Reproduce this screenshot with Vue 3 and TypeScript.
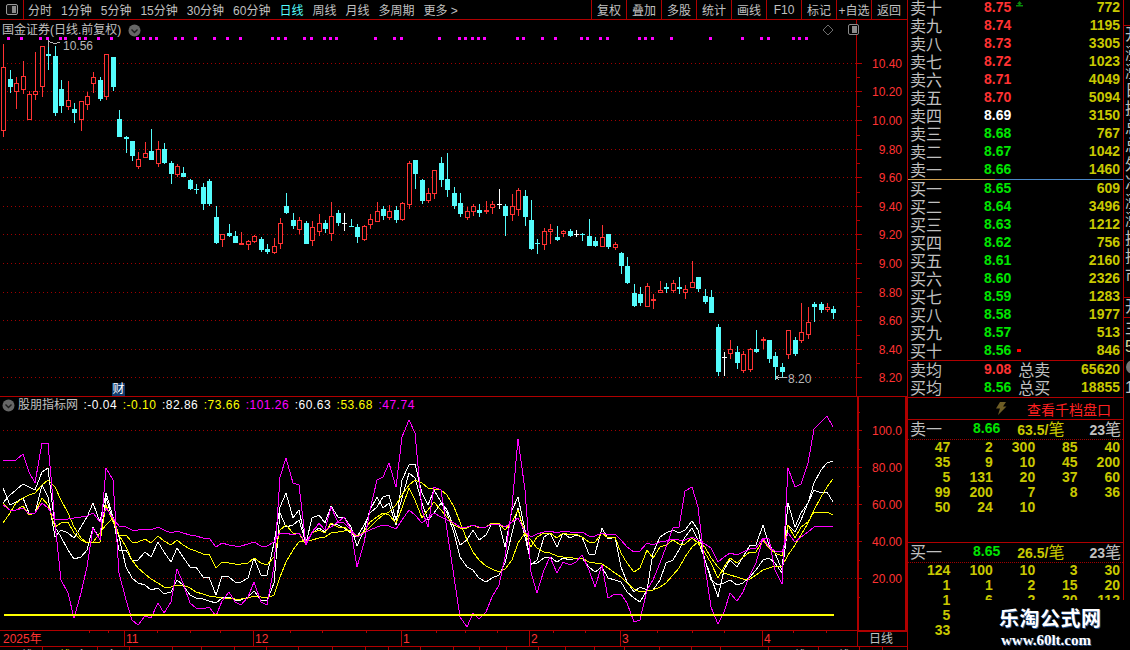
<script setup lang="ts">
type CandleRow = [number, number, number, number, string]

// 日K数据：hi, lo, top, bottom, 类型（r 阳 c 阴 w 十字），读图时按分段记录
const partA: CandleRow[] = [
  [12,290,82,272,'r'],[90,158,117,141,'c'],[112,207,130,155,'r'],[64,162,109,149,'r'],[154,240,163,239,'r'],
  [37,180,154,164,'r'],[18,170,19,140,'r'],[0,90,42,48,'c'],[18,228,48,219,'c'],[120,219,147,198,'c'],
  [123,210,181,200,'r'],[190,249,207,219,'c'],[183,272,184,239,'r'],[156,210,169,194,'r'],[96,159,112,131,'r'],
  [111,183,120,177,'c'],[42,180,43,170,'r'],[51,153,51,141,'c'],[210,291,237,291,'c'],[288,339,291,297,'c'],
  [303,362,303,348,'c'],[336,387,358,380,'r'],[306,354,340,353,'r'],[267,360,333,360,'c'],[303,381,327,372,'r'],
  [309,372,327,370,'c'],[363,432,369,402,'c'],[372,411,378,405,'r'],[381,411,399,411,'c'],[417,450,420,447,'c'],
  [432,462,447,450,'c'],[429,510,441,492,'c'],[417,498,423,492,'c'],[498,612,531,609,'c'],[582,621,582,600,'r'],
  [552,590,579,588,'c'],[573,609,588,609,'c'],[576,615,609,615,'r'],[600,630,603,615,'r'],[585,609,588,606,'r'],
  [591,636,597,630,'c'],[612,642,627,636,'c'],[594,642,618,639,'r'],[534,627,549,612,'r'],[459,522,498,519,'c'],
  [519,567,540,558,'c'],[531,582,540,570,'r'],
]
const partB: CandleRow[] = [
  [273,342,279,342,'c'],[273,348,291,333,'r'],[252,318,279,306,'r'],[270,309,279,297,'c'],[216,333,258,312,'r'],
  [240,288,249,279,'c'],[249,303,279,282,'w'],[267,291,288,291,'c'],[282,339,291,321,'c'],[285,333,288,330,'r'],
  [252,297,267,285,'r'],[216,276,243,276,'r'],[228,270,237,258,'c'],[225,270,243,264,'r'],[228,279,240,270,'c'],
  [216,273,219,270,'r'],[93,237,99,225,'r'],[90,177,90,132,'c'],[147,222,150,213,'c'],[174,219,189,213,'r'],
  [120,207,120,192,'r'],[81,171,99,150,'c'],[69,201,147,180,'c'],[171,237,189,228,'c'],[189,261,219,252,'c'],
  [231,270,243,264,'r'],[222,258,228,246,'r'],[222,261,240,249,'c'],[213,252,240,246,'r'],[213,252,222,234,'r'],
  [177,237,222,225,'w'],[222,318,228,258,'c'],[192,273,228,255,'r'],[174,258,180,240,'r'],[180,288,198,261,'c'],
  [210,360,270,357,'c'],[327,372,339,342,'c'],[294,360,303,345,'r'],[282,342,297,306,'r'],[288,333,321,330,'c'],
  [300,321,303,312,'r'],[297,321,303,318,'c'],[300,321,312,315,'w'],
]
const partC: CandleRow[] = [
  [129,153,132,136,'c'],[87,168,138,168,'c'],[141,171,153,168,'c'],[105,171,141,171,'r'],[132,177,132,171,'c'],
  [156,180,162,174,'r'],[186,252,189,228,'c'],[201,282,228,279,'c'],[282,351,309,348,'c'],[291,348,312,339,'c'],
  [279,351,288,351,'r'],[312,357,327,330,'r'],[273,309,300,309,'r'],[279,309,291,297,'c'],[270,309,279,303,'r'],
  [261,312,291,297,'c'],[285,327,297,309,'r'],[213,294,276,294,'r'],[261,306,261,297,'c'],[297,342,318,336,'c'],
  [300,369,321,369,'c'],[402,558,411,546,'c'],[486,558,501,504,'w'],[450,507,477,492,'r'],[468,537,486,519,'c'],
  [483,549,492,543,'r'],[474,546,477,540,'r'],[420,489,477,486,'c'],[441,477,447,453,'r'],[450,519,450,507,'c'],
  [486,570,498,531,'c'],[519,561,531,546,'c'],[420,507,420,495,'r'],[441,498,450,492,'c'],[339,459,426,453,'r'],
  [351,447,396,435,'r'],[336,396,342,351,'c'],[336,369,342,360,'c'],[339,366,351,360,'r'],[348,387,357,369,'c'],
]

const barX = (i: number) => Math.round(3.3 + 6.435 * i)
const toAbs = (rows: CandleRow[], offset: number) =>
  rows.map((r) => ({
    hi: Math.round(offset + r[0] / 3),
    lo: Math.round(offset + r[1] / 3),
    top: Math.round(offset + r[2] / 3),
    bot: Math.round(offset + r[3] / 3),
    kind: r[4],
  }))
const candles = [...toAbs(partA, 40), ...toAbs(partB, 130), ...toAbs(partC, 190)].map((c, i) => ({
  ...c,
  x: barX(i),
  id: i,
}))
const candleColor: Record<string, string> = { r: '#ff3232', c: '#54fcfc', w: '#ffffff' }

// 顶部信号点
const signalDots = [
  ...[25,65,121,142,182,197,238,256,295,334,412,430,451,469,526,547,586,643,682,721,817,835,856,913,934,973,991,1009,1126,1183,1204,1318].map((z) => z / 3),
  ...[28,46,67,85,103,202,220,277,316,394,412,451,472,568,586,607,664,781,877,934,955,1030,1048,1069].map((z) => 450 + z / 3),
].map((x) => Math.round(x - 1.5))

const mainGrid = [63, 91, 120, 149, 177, 206, 234, 263, 292, 320, 349, 377]
const mainLabels = ['10.40','10.20','10.00','9.80','9.60','9.40','9.20','9.00','8.80','8.60','8.40','8.20']
const mainMinor = mainGrid.slice(0, -1).map((y, i) => Math.round((y + mainGrid[i + 1]) / 2))
const subGrid = [430, 467, 504, 541, 578]
const subLabels = ['100.0', '80.00', '60.00', '40.00', '20.00']
const subMinor = [412, 449, 486, 523, 560, 597]

// 指标线：前 70 点 + 后 60 点，分两段读取
const makeLine = (head: number[], tail: number[]) =>
  [
    ...head.map((z, i) => `${barX(i)},${Math.round(370 + z / 3)}`),
    ...tail.map((z, i) => `${barX(i + 70)},${Math.round(390 + z / 3)}`),
  ].join(' ')

const subLines = [
  {
    color: '#ffffff',
    points: makeLine(
      [355,405,395,385,430,430,345,380,500,480,490,505,470,440,400,455,370,440,540,540,570,570,545,560,515,545,575,533,560,590,592,620,620,675,618,620,635,635,625,565,615,615,520,410,370,445,420,520,445,435,460,408,440,442,470,527,480,420,380,415,400,465,330,285,282,370,405,360,395,420],
      [410,465,450,420,450,435,400,400,470,360,320,420,525,510,440,430,470,428,445,435,440,492,492,415,447,440,530,575,605,590,600,490,440,430,420,430,420,392,420,510,560,620,540,510,530,500,465,465,405,465,490,540,340,410,370,340,300,310,305,337],
    ),
  },
  {
    color: '#ffffff',
    points: makeLine(
      [400,375,360,343,352,360,305,295,470,500,540,568,562,540,470,510,385,450,500,590,625,640,645,660,655,672,665,630,645,675,683,688,692,700,685,682,690,690,680,662,690,692,640,430,470,465,450,520,490,475,485,462,465,475,490,500,465,430,410,380,375,450,385,310,325,400,450,430,400,430],
      [430,500,530,540,565,575,565,555,520,430,355,440,520,520,505,500,515,505,510,505,505,530,545,530,565,570,575,605,625,635,600,600,570,520,510,480,440,415,450,510,570,585,580,570,585,580,560,540,510,505,520,550,405,425,390,340,280,240,218,213],
    ),
  },
  {
    color: '#ffff00',
    points: makeLine(
      [400,420,420,407,435,430,385,405,470,460,455,490,510,520,515,515,405,455,495,495,515,515,508,518,498,512,525,510,525,538,542,552,552,595,575,580,583,583,578,563,578,584,560,480,465,490,490,525,490,480,490,460,470,470,485,500,485,455,440,430,435,460,415,355,390,445,420,395,420,440],
      [405,415,415,405,415,410,400,400,420,395,360,430,470,440,430,428,445,428,435,433,440,457,457,428,445,442,490,520,545,533,480,505,470,465,450,462,462,445,460,490,520,565,530,505,520,500,487,485,450,475,490,498,405,445,410,395,365,370,365,375],
    ),
  },
  {
    color: '#ffff00',
    points: makeLine(
      [460,430,400,385,375,368,345,330,350,390,430,470,505,520,515,490,465,445,495,530,570,595,612,628,640,650,652,645,645,655,665,672,678,682,683,685,687,687,683,678,682,685,675,620,575,540,515,510,510,505,500,490,487,483,480,497,490,470,450,435,425,405,375,345,330,340,355,358,360,375],
      [350,395,450,485,510,527,537,545,538,510,460,430,450,475,485,490,497,500,502,507,505,515,520,522,535,550,560,578,598,605,602,600,590,580,555,535,500,470,455,470,505,530,550,555,562,567,567,555,540,533,527,527,495,465,435,400,360,320,290,268],
    ),
  },
  {
    color: '#ff00ff',
    points: makeLine(
      [405,420,420,415,432,430,400,415,447,447,447,445,442,437,430,455,415,445,468,472,480,480,478,480,472,480,488,482,490,495,497,505,505,530,520,525,527,527,522,517,527,528,517,490,490,495,490,518,485,462,480,470,455,460,480,500,490,480,470,465,468,478,450,420,435,460,445,430,440,450],
      [398,412,412,405,412,410,402,402,412,395,385,425,440,432,425,422,430,422,425,425,425,437,437,428,435,432,450,470,485,482,458,465,457,452,447,450,450,442,450,462,475,515,500,490,495,485,477,475,445,470,482,485,430,455,440,425,410,407,407,412],
    ),
  },
  {
    color: '#ff00ff',
    points: makeLine(
      [270,273,270,253,305,340,218,219,460,630,670,745,670,590,475,510,295,330,610,690,750,765,738,745,700,728,695,598,640,700,715,717,712,737,692,667,695,705,680,637,695,705,590,320,265,340,345,525,490,460,480,410,455,440,480,590,520,420,330,320,280,350,200,150,190,420,470,350,360,480],
      [560,680,710,670,688,665,620,585,500,350,148,300,545,610,540,500,550,515,525,515,495,540,590,525,625,612,612,640,695,690,600,570,520,470,415,410,303,292,350,530,650,703,665,610,632,605,555,520,445,447,540,583,235,290,282,220,118,95,78,110],
    ),
  },
]

const subValues = [
  { text: ':-0.04', color: '#ffffff' },
  { text: ':-0.10', color: '#ffff00' },
  { text: ':82.86', color: '#ffffff' },
  { text: ':73.66', color: '#ffff00' },
  { text: ':101.26', color: '#ff00ff' },
  { text: ':60.63', color: '#ffffff' },
  { text: ':53.68', color: '#ffff00' },
  { text: ':47.74', color: '#ff00ff' },
]

const periods = [
  { text: '分时' }, { text: '1分钟' }, { text: '5分钟' }, { text: '15分钟' }, { text: '30分钟' }, { text: '60分钟' },
  { text: '日线', active: true }, { text: '周线' }, { text: '月线' }, { text: '多周期' }, { text: '更多 >' },
]
const actions = ['复权', '叠加', '多股', '统计', '画线', 'F10', '标记', '+自选', '返回']

const months = [
  { x: 124, label: '11' }, { x: 253, label: '12' }, { x: 401, label: '1' },
  { x: 529, label: '2' }, { x: 620, label: '3' }, { x: 762, label: '4' },
]
const axisTicks = [89, 108, 157, 190, 220, 290, 322, 366, 436, 465, 497, 553, 585, 657, 692, 724, 793, 826]
const stripTicks = [42, 97, 129, 172, 201, 234, 266, 298, 332, 365, 388, 420, 453, 479, 506, 538, 565, 594, 624, 659, 691, 720, 768, 818, 859, 882]

const asks = [
  { name: '卖十', price: '8.75', qty: '772', tone: 'up', mark: 'arrow' },
  { name: '卖九', price: '8.74', qty: '1195', tone: 'up' },
  { name: '卖八', price: '8.73', qty: '3305', tone: 'up' },
  { name: '卖七', price: '8.72', qty: '1023', tone: 'up' },
  { name: '卖六', price: '8.71', qty: '4049', tone: 'up' },
  { name: '卖五', price: '8.70', qty: '5094', tone: 'up' },
  { name: '卖四', price: '8.69', qty: '3150', tone: 'flat' },
  { name: '卖三', price: '8.68', qty: '767', tone: 'down' },
  { name: '卖二', price: '8.67', qty: '1042', tone: 'down' },
  { name: '卖一', price: '8.66', qty: '1460', tone: 'down' },
]
const bids = [
  { name: '买一', price: '8.65', qty: '609', tone: 'down' },
  { name: '买二', price: '8.64', qty: '3496', tone: 'down' },
  { name: '买三', price: '8.63', qty: '1212', tone: 'down' },
  { name: '买四', price: '8.62', qty: '756', tone: 'down' },
  { name: '买五', price: '8.61', qty: '2160', tone: 'down' },
  { name: '买六', price: '8.60', qty: '2326', tone: 'down' },
  { name: '买七', price: '8.59', qty: '1283', tone: 'down' },
  { name: '买八', price: '8.58', qty: '1977', tone: 'down' },
  { name: '买九', price: '8.57', qty: '513', tone: 'down' },
  { name: '买十', price: '8.56', qty: '846', tone: 'down', mark: 'dot' },
]
const askOrders = ['47','2','300','85','40','35','9','10','45','200','5','131','20','37','60','99','200','7','8','36','50','24','10']
const bidOrders = ['124','100','10','3','30','1','1','2','15','20','1','6','2','20','112','5','','','','','33']

const edgeChars = ['开','涨','涨','日','换','总','总','外','净','涨','涨','换','振','市']
</script>

<template>
  <div class="screen">
    <!-- 左侧：工具栏 + K线 + 指标 -->
    <div class="left">
      <div class="toolbar">
        <div class="layout-cell">
          <svg width="14" height="13" viewBox="0 0 14 13">
            <rect x="1.5" y="1.5" width="11" height="10" rx="1.5" fill="#111" stroke="#9a9a9a" />
            <rect x="7" y="3" width="4" height="7" fill="#8a8a8a" />
          </svg>
        </div>
        <div class="periods">
          <span v-for="p in periods" :key="p.text" :class="{ active: p.active }">{{ p.text }}</span>
        </div>
        <div class="actions">
          <span v-for="a in actions" :key="a">{{ a }}</span>
        </div>
      </div>

      <!-- K线主图 -->
      <div class="pane-main">
        <svg class="chart" width="907" height="376" viewBox="0 20 907 376">
          <line v-for="y in mainGrid" :key="y" x1="3" x2="856" :y1="y + 0.5" :y2="y + 0.5" class="grid" />
          <rect x="856" y="20" width="1" height="376" fill="#b00000" />
          <template v-for="(y, i) in mainGrid" :key="'t' + y">
            <rect x="857" :y="y" width="5" height="1" fill="#b00000" />
            <text x="902" :y="y + 5" text-anchor="end" class="axis-label">{{ mainLabels[i] }}</text>
          </template>
          <rect v-for="y in mainMinor" :key="'m' + y" x="857" :y="y" width="3" height="1" fill="#b00000" />

          <rect v-for="(x, i) in signalDots" :key="'d' + i" :x="x" y="37" width="3" height="3" fill="#ff00ff" />

          <g v-for="c in candles" :key="c.id">
            <rect :x="c.x" :y="c.hi" width="1" :height="c.lo - c.hi" :fill="candleColor[c.kind]" />
            <rect v-if="c.kind === 'c'" :x="c.x - 2" :y="c.top" width="5" :height="Math.max(c.bot - c.top, 1)" fill="#54fcfc" />
            <rect v-else-if="c.kind === 'r'" :x="c.x - 1.5" :y="c.top + 0.5" width="4" :height="Math.max(c.bot - c.top - 1, 1)" fill="#000" stroke="#ff3232" />
            <rect v-else :x="c.x - 2" :y="c.top" width="5" height="1" fill="#fff" />
          </g>

          <path d="M48.5 40V47M48.5 41.5L54 43.5L60 42.5" fill="none" stroke="#b8b8b8" />
          <text x="63" y="50" class="mark-label">10.56</text>
          <path d="M787 377.5H776M776 377.5L779 375M776 377.5L779 380" fill="none" stroke="#b8b8b8" />
          <text x="788" y="383" class="mark-label">8.20</text>
        </svg>

        <div class="stock-title">
          <span>国金证券(日线.前复权)</span>
          <svg width="13" height="13" viewBox="0 0 13 13" class="round-btn">
            <circle cx="6.5" cy="6.5" r="6" fill="#666" />
            <path d="M3.5 5.5L6.5 8.5L9.5 5.5" fill="none" stroke="#1c1c1c" stroke-width="1.4" />
          </svg>
        </div>

        <svg class="pane-tools" width="38" height="14" viewBox="0 0 38 14">
          <path d="M6 2L11 7L6 12L1 7Z" fill="none" stroke="#6e6e6e" />
          <rect x="26.5" y="1.5" width="10" height="10" rx="1.5" fill="#000" stroke="#8a8a8a" />
          <rect x="30" y="3" width="5" height="7" fill="#8a8a8a" />
        </svg>
        <span class="fin-tag">财</span>
      </div>

      <!-- 指标副图 -->
      <div class="pane-sub">
        <svg class="chart" width="907" height="233" viewBox="0 397 907 233">
          <line v-for="y in subGrid" :key="y" x1="3" x2="856" :y1="y + 0.5" :y2="y + 0.5" class="grid" />
          <rect x="857" y="397" width="2" height="233" fill="#b00000" />
          <rect x="905" y="397" width="2" height="233" fill="#b00000" />
          <template v-for="(y, i) in subGrid" :key="'t' + y">
            <rect x="857" :y="y" width="5" height="1" fill="#b00000" />
            <text x="902" :y="y + 5" text-anchor="end" class="axis-label">{{ subLabels[i] }}</text>
          </template>
          <rect v-for="y in subMinor" :key="'m' + y" x="857" :y="y" width="3" height="1" fill="#b00000" />
          <polyline v-for="(l, i) in subLines" :key="i" :points="l.points" fill="none" :stroke="l.color" stroke-width="1" />
          <rect x="4" y="614" width="830" height="2" fill="#ffff00" />
        </svg>
        <div class="sub-title">
          <svg width="13" height="13" viewBox="0 0 13 13">
            <circle cx="6.5" cy="6.5" r="6" fill="#666" />
            <path d="M3.5 5.5L6.5 8.5L9.5 5.5" fill="none" stroke="#1c1c1c" stroke-width="1.4" />
          </svg>
          <span class="sub-name">股朋指标网</span>
          <span v-for="v in subValues" :key="v.text" class="sub-value" :style="{ color: v.color }">{{ v.text }}</span>
        </div>
      </div>

      <!-- 时间轴 -->
      <svg class="chart" width="907" height="20" viewBox="0 630 907 20">
        <rect x="0" y="630" width="907" height="1" fill="#b00000" />
        <rect x="857" y="630" width="50" height="2" fill="#b00000" />
        <rect x="0" y="646" width="907" height="1" fill="#b00000" />
        <rect x="857" y="631" width="1" height="15" fill="#b00000" />
        <text x="3" y="643" class="axis-label">2025年</text>
        <template v-for="m in months" :key="m.x">
          <rect :x="m.x" y="631" width="1" height="15" fill="#b00000" />
          <text :x="m.x + 2" y="643" class="axis-label">{{ m.label }}</text>
        </template>
        <rect v-for="x in axisTicks" :key="x" :x="x" y="631" width="1" height="2" fill="#b00000" />
        <rect v-for="x in stripTicks" :key="'s' + x" :x="x" y="647" width="1" height="3" fill="#b00000" />
        <text x="869" y="643" class="strip-label">日线</text>
        <text x="9" y="660" class="strip-label">周线</text>
        <text x="47" y="660" fill="#d8d800" font-size="12">周线</text>
        <text x="76" y="660" class="strip-label">多</text>
        <text x="106" y="660" class="strip-label">多</text>
        <text x="782" y="660" class="strip-label">周线</text>
        <text x="826" y="660" class="strip-label">周线</text>
      </svg>
    </div>

    <!-- 右侧：盘口 -->
    <div class="book">
      <div class="levels first">
        <div v-for="r in asks" :key="r.name" class="level">
          <span class="name">{{ r.name }}</span>
          <span class="price" :class="r.tone">{{ r.price }}</span>
          <svg v-if="r.mark === 'arrow'" class="mark" width="7" height="7" viewBox="0 0 7 7">
            <path d="M3.5 0L6 3H4.5V4H7V5.5H0V4H2.5V3H1Z" fill="#0a8a0a" />
          </svg>
          <span class="qty">{{ r.qty }}</span>
        </div>
      </div>
      <div class="split-line"></div>
      <div class="levels">
        <div v-for="r in bids" :key="r.name" class="level">
          <span class="name">{{ r.name }}</span>
          <span class="price" :class="r.tone">{{ r.price }}</span>
          <i v-if="r.mark === 'dot'" class="red-dot"></i>
          <span class="qty">{{ r.qty }}</span>
        </div>
      </div>

      <div class="summary">
        <div class="level">
          <span class="name">卖均</span><span class="price up">9.08</span>
          <span class="total">总卖</span><span class="qty">65620</span>
        </div>
        <div class="level">
          <span class="name">买均</span><span class="price down">8.56</span>
          <span class="total">总买</span><span class="qty">18855</span>
        </div>
      </div>

      <div class="depth-link">
        <svg width="12" height="13" viewBox="0 0 12 13">
          <path d="M5 0H11L8 4.500H11.500L3 13L5 6.500H1Z" fill="#6d5c24" />
        </svg>
        <span>查看千档盘口</span>
      </div>

      <div class="orders">
        <div class="order-head">
          <span class="name">卖一</span><span class="price down">8.66</span>
          <span class="avg">63.5/<em>笔</em></span><span class="count">23<em>笔</em></span>
        </div>
        <div class="order-grid">
          <span v-for="(n, i) in askOrders" :key="i">{{ n }}</span>
        </div>
      </div>
      <div class="orders last">
        <div class="order-head">
          <span class="name">买一</span><span class="price down">8.65</span>
          <span class="avg">26.5/<em>笔</em></span><span class="count">23<em>笔</em></span>
        </div>
        <div class="order-grid">
          <span v-for="(n, i) in bidOrders" :key="i">{{ n }}</span>
        </div>
      </div>
    </div>

    <!-- 最右侧被裁切的行情栏 -->
    <div class="edge">
      <div class="edge-block tall">
        <span v-for="(c, i) in edgeChars" :key="i">{{ c }}</span>
      </div>
      <div class="edge-block"><span>开</span></div>
      <div class="edge-block rest">
        <span>主</span><span class="tint">5</span><i class="edge-dot"></i><span>1</span>
      </div>
    </div>

    <!-- 水印 -->
    <div class="watermark">
      <strong>乐淘公式网</strong>
      <b>www.60lt.com</b>
    </div>
  </div>
</template>

<style>
html,
body {
  margin: 0;
  background: #000;
}
</style>

<style scoped>
.screen {
  position: relative;
  display: flex;
  width: 1130px;
  height: 650px;
  overflow: hidden;
  background: #000;
  color: #c0c0c0;
  font-family: 'Liberation Sans', 'Noto Sans CJK SC', sans-serif;
  font-size: 12px;
}

.left {
  display: flex;
  flex-direction: column;
  flex: none;
  width: 907px;
}

/* 工具栏 */
.toolbar {
  display: flex;
  align-items: stretch;
  flex: none;
  height: 19px;
  border-bottom: 1px solid #b00000;
}

.layout-cell {
  display: flex;
  align-items: center;
  justify-content: center;
  width: 23px;
  border-right: 1px solid #b00000;
}

.periods {
  display: flex;
  align-items: center;
  gap: 9px;
  padding-left: 4px;
}

.periods .active {
  color: #54fcfc;
}

.actions {
  display: flex;
  margin-left: auto;
  margin-right: 1px;
}

.actions span {
  display: flex;
  align-items: center;
  justify-content: center;
  width: 35px;
  border-left: 1px solid #b00000;
  box-sizing: border-box;
  white-space: nowrap;
}

/* 图表区 */
.chart {
  display: block;
  flex: none;
  shape-rendering: crispEdges;
}

.grid {
  stroke: #a00000;
  stroke-width: 1;
  stroke-dasharray: 1 3;
}

.axis-label {
  fill: #ff3232;
  font-size: 12px;
}

.mark-label {
  fill: #b8b8b8;
  font-size: 12px;
}

.strip-label {
  fill: #c0c0c0;
  font-size: 12px;
}

.pane-main {
  position: relative;
  flex: none;
  height: 376px;
  border-bottom: 1px solid #b00000;
}

.stock-title {
  position: absolute;
  top: 2px;
  left: 2px;
  display: flex;
  align-items: center;
  gap: 7px;
  line-height: 16px;
}

.pane-tools {
  position: absolute;
  top: 3px;
  left: 822px;
}

.fin-tag {
  position: absolute;
  top: 363px;
  left: 112px;
  width: 13px;
  height: 13px;
  background: #0f3a6c;
  color: #fff;
  text-align: center;
  line-height: 13px;
}

.pane-sub {
  position: relative;
  flex: none;
  height: 233px;
}

.sub-title {
  position: absolute;
  top: 0;
  left: 2px;
  display: flex;
  align-items: center;
  gap: 5.5px;
  height: 16px;
  line-height: 16px;
}

.sub-title svg {
  margin-right: -2.5px;
}

.sub-value {
  letter-spacing: 0.5px;
}

/* 盘口 */
.book {
  display: flex;
  flex-direction: column;
  flex: none;
  box-sizing: border-box;
  width: 217px;
  border-left: 1px solid #b00000;
  border-right: 1px solid #b00000;
}

.levels.first {
  margin-top: -1px;
}

.level {
  display: flex;
  align-items: center;
  box-sizing: border-box;
  height: 18px;
  padding: 0 3px 2px 2px;
  position: relative;
}

.name {
  width: 74px;
  flex: none;
  font-size: 16px;
  color: #c0c0c0;
}

.price {
  font-size: 14px;
  font-weight: 700;
}

.price.up {
  color: #ff3232;
}

.price.flat {
  color: #fff;
}

.price.down {
  color: #00e600;
}

.qty {
  margin-left: auto;
  font-size: 14px;
  font-weight: 700;
  color: #c8c800;
}

.mark {
  margin-left: 5px;
  margin-top: -6px;
}

.red-dot {
  width: 4px;
  height: 3px;
  margin-left: 6px;
  background: #f00;
}

.split-line {
  flex: none;
  height: 1px;
  background: linear-gradient(to right, #d0a050 0, #d0a050 87px, #4a88c8 87px);
}

.summary {
  flex: none;
  border-top: 1px solid #b00000;
  border-bottom: 1px solid #b00000;
}

.total {
  width: 32px;
  margin-left: 7px;
  font-size: 16px;
  color: #c0c0c0;
}

.depth-link {
  display: flex;
  align-items: center;
  flex: none;
  box-sizing: border-box;
  height: 22px;
  padding-left: 87px;
  gap: 20px;
  border-bottom: 1px solid #b00000;
  color: #ff2020;
  font-size: 14px;
}

.orders {
  flex: none;
  box-sizing: border-box;
  height: 123px;
  border-bottom: 1px solid #b00000;
}

.orders.last {
  height: auto;
  border-bottom: 0;
}

.order-head {
  display: flex;
  align-items: center;
  box-sizing: border-box;
  height: 20px;
  padding: 0 2px 3px;
  border-bottom: 1px dotted #a00000;
}

.order-head .name {
  width: 63px;
}

.order-head .avg {
  margin-left: 17px;
  color: #c8c800;
  font-size: 14px;
  font-weight: 700;
}

.order-head .count {
  margin-left: auto;
  color: #c0c0c0;
  font-size: 14px;
  font-weight: 700;
}

.order-head em {
  font-style: normal;
  font-size: 16px;
  font-weight: 400;
  color: #c8c800;
}

.order-head .count em {
  color: #c0c0c0;
}

.order-grid {
  display: grid;
  grid-template-columns: repeat(5, 42.4px);
  grid-auto-rows: 15px;
  color: #c8c800;
  font-size: 14px;
  font-weight: 700;
  line-height: 15px;
  text-align: right;
}

/* 右侧裁切栏 */
.edge {
  display: flex;
  flex-direction: column;
  flex: none;
  width: 6px;
  overflow: hidden;
  padding-top: 25px;
  box-sizing: border-box;
  font-size: 16px;
}

.edge-block {
  display: flex;
  flex-direction: column;
  flex: none;
  width: 30px;
  padding-left: 1px;
  border-top: 1px solid #b00000;
  line-height: 18.5px;
}

.edge-block.tall {
  height: 271px;
}

.edge-block.rest {
  line-height: 19px;
}

.edge-block .tint {
  color: #d8d8a0;
}

.edge-dot {
  width: 14px;
  height: 14px;
  border-radius: 50%;
  margin: 4px 0 4px 1px;
  background: #777;
}

/* 水印 */
.watermark {
  position: absolute;
  top: 600px;
  left: 956px;
  display: flex;
  flex-direction: column;
  align-items: flex-start;
  box-sizing: border-box;
  width: 174px;
  height: 50px;
  padding-left: 43px;
  background: #000;
  color: #fff;
  text-shadow: 1px 1px 0 #24508c;
}

.watermark strong {
  margin-top: 6px;
  font-size: 20px;
  line-height: 26px;
  letter-spacing: 0.5px;
  white-space: nowrap;
}

.watermark b {
  margin-left: 2px;
  font-family: 'Liberation Serif', serif;
  font-size: 15px;
  line-height: 16px;
}
</style>
